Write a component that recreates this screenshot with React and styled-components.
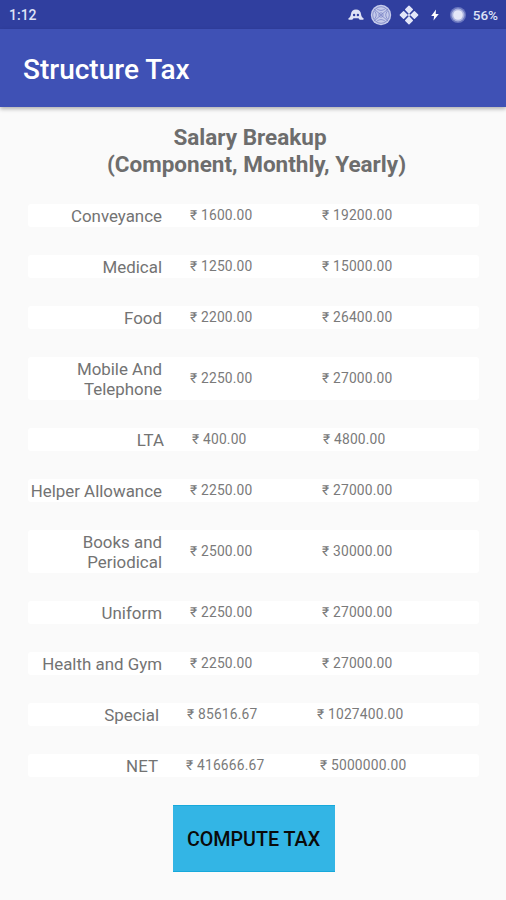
import styled, { createGlobalStyle } from 'styled-components';

const components = [
  { name: 'Conveyance', monthly: '1600.00', yearly: '19200.00' },
  { name: 'Medical', monthly: '1250.00', yearly: '15000.00' },
  { name: 'Food', monthly: '2200.00', yearly: '26400.00' },
  { name: 'Mobile And Telephone', monthly: '2250.00', yearly: '27000.00' },
  { name: 'LTA', monthly: '400.00', yearly: '4800.00', columns: [136, 131] },
  { name: 'Helper Allowance', monthly: '2250.00', yearly: '27000.00' },
  { name: 'Books and Periodical', monthly: '2500.00', yearly: '30000.00' },
  { name: 'Uniform', monthly: '2250.00', yearly: '27000.00' },
  { name: 'Health and Gym', monthly: '2250.00', yearly: '27000.00' },
  { name: 'Special', monthly: '85616.67', yearly: '1027400.00', columns: [131, 130] },
  { name: 'NET', monthly: '416666.67', yearly: '5000000.00', columns: [130, 134] },
];

function StatusIcons() {
  return (
    <Icons>
      <svg width="16" height="14" viewBox="0 0 16 14">
        <path
          d="M8 1.500C5 1.500 3.200 3.500 3 6c-.2 2-.9 3.300-2.400 4.200-.6.500-.3 1.500.5 1.500h3.200l1.200-1.500h5l1.200 1.500h3.200c.8 0 1.100-1 .5-1.500C13.900 9.300 13.200 8 13 6c-.2-2.500-2-4.500-5-4.500z"
          fill="#dfe3f6"
        />
        <circle cx="6.100" cy="7" r="1.200" fill="#303f9f" />
        <circle cx="9.900" cy="7" r="1.200" fill="#303f9f" />
      </svg>
      <svg width="22" height="22" viewBox="0 0 22 22">
        <circle cx="11" cy="11" r="10.200" fill="#c6cceb" />
        <g fill="none" stroke="#7883c5" strokeWidth="0.8">
          <circle cx="11" cy="11" r="8.300" />
          <circle cx="11" cy="11" r="2.200" />
          <path d="M4 5l14 12M18 5L4 17M6.500 4.500c3 2.500 6 2.500 9 0M6.500 17.500c3-2.500 6-2.500 9 0M4.500 7c2.300 2.700 2.300 5.300 0 8M17.500 7c-2.300 2.700-2.300 5.300 0 8" />
        </g>
      </svg>
      <svg width="20" height="20" viewBox="0 0 20 20">
        <path
          d="M10 1.300l3.300 3.300-3.300 3.300-3.300-3.300zM10 12.100l3.300 3.300-3.300 3.300-3.300-3.300zM4.600 6.700L7.900 10l-3.300 3.300L1.300 10zM15.400 6.700l3.300 3.300-3.300 3.300-3.300-3.300z"
          fill="#e3e7f9"
          stroke="#e3e7f9"
          strokeWidth="1.400"
          strokeLinejoin="round"
        />
        <circle cx="10" cy="10" r="1.500" fill="#c6cceb" />
      </svg>
      <svg width="10" height="14" viewBox="0 0 10 14">
        <path d="M6 1.500L1.200 8h2.900l-.6 4.500L8.800 6H5.700z" fill="#fff" />
      </svg>
      <svg width="18" height="18" viewBox="0 0 18 18">
        <circle cx="9" cy="9" r="8" fill="#6b77bf" />
        <circle cx="9" cy="9" r="6.500" fill="#aab2df" />
        <circle cx="9" cy="9" r="4.800" fill="#e4e7f8" />
      </svg>
    </Icons>
  );
}

function SalaryRow({ name, monthly, yearly, columns = [134, 132] }) {
  return (
    <Row $columns={columns}>
      <Label>{name}</Label>
      <Amount>₹ {monthly}</Amount>
      <Amount>₹ {yearly}</Amount>
    </Row>
  );
}

export default function App() {
  return (
    <>
      <GlobalStyle />
      <Screen>
        <StatusBar>
          <span>1:12</span>
          <StatusIcons />
          <span>56%</span>
        </StatusBar>
        <AppBar>
          <h1>Structure Tax</h1>
        </AppBar>
        <Content>
          <Heading>
            <span>Salary Breakup</span>
            <span>(Component, Monthly, Yearly)</span>
          </Heading>
          <Rows>
            {components.map((item) => (
              <SalaryRow key={item.name} {...item} />
            ))}
          </Rows>
          <ComputeButton>COMPUTE TAX</ComputeButton>
        </Content>
      </Screen>
    </>
  );
}

const GlobalStyle = createGlobalStyle`
  * {
    box-sizing: border-box;
  }

  body {
    margin: 0;
    background: #fafafa;
    font-family: Roboto, 'Noto Sans', sans-serif;
  }
`;

const Screen = styled.div`
  height: 900px;
  overflow: hidden;
  background: #fafafa;
`;

const StatusBar = styled.div`
  display: flex;
  align-items: center;
  height: 29px;
  padding: 0 8px 0 9px;
  background: #303f9f;
  color: #dfe3f6;
  font-size: 14px;
  font-weight: 500;

  span:last-child {
    font-size: 13.500px;
  }
`;

const Icons = styled.div`
  display: flex;
  align-items: center;
  margin: 0 6px 0 auto;

  svg:nth-child(2) {
    margin-left: 6px;
  }

  svg:nth-child(3) {
    margin-left: 7px;
  }

  svg:nth-child(4) {
    margin-left: 11px;
  }

  svg:nth-child(5) {
    margin-left: 9px;
  }
`;

const AppBar = styled.header`
  display: flex;
  align-items: center;
  height: 78px;
  padding: 3px 0 0 23px;
  background: #3f51b5;
  box-shadow: 0 2px 4px rgba(0, 0, 0, 0.3);

  h1 {
    margin: 0;
    color: #fff;
    font-size: 28px;
    font-weight: 500;
  }
`;

const Content = styled.main`
  display: flex;
  flex-direction: column;
  align-items: center;
  padding: 17px 27px 0 28px;
`;

const Heading = styled.h2`
  display: flex;
  flex-direction: column;
  align-items: center;
  margin: 0 0 0 6px;
  color: #6d6d6d;
  font-size: 22.500px;
  font-weight: 700;
  line-height: 26.500px;

  span:first-child {
    margin-right: 13px;
  }
`;

const Rows = styled.div`
  display: flex;
  flex-direction: column;
  gap: 28px;
  width: 100%;
  margin-top: 27px;
`;

const Row = styled.div`
  display: grid;
  grid-template-columns: ${({ $columns }) => `${$columns[0]}px ${$columns[1]}px`} 1fr;
  align-items: center;
  min-height: 23px;
  padding: 2px 0 1px;
  border-radius: 3px;
  background: #fff;
`;

const Label = styled.span`
  color: #737373;
  font-size: 16.900px;
  line-height: 20px;
  text-align: right;
`;

const Amount = styled.span`
  padding: 0 0 2px 28px;
  color: #7a7a7a;
  font-size: 13.800px;
  line-height: 18px;
  letter-spacing: 0.2px;
  white-space: nowrap;
`;

const ComputeButton = styled.button`
  width: 162px;
  height: 67px;
  margin-top: 28px;
  padding: 1px 0 0;
  border: solid #16a9db;
  border-width: 1px 0;
  background: #33b5e5;
  color: #0a0a0a;
  font-family: inherit;
  font-size: 19.700px;
  font-weight: 500;
`;
